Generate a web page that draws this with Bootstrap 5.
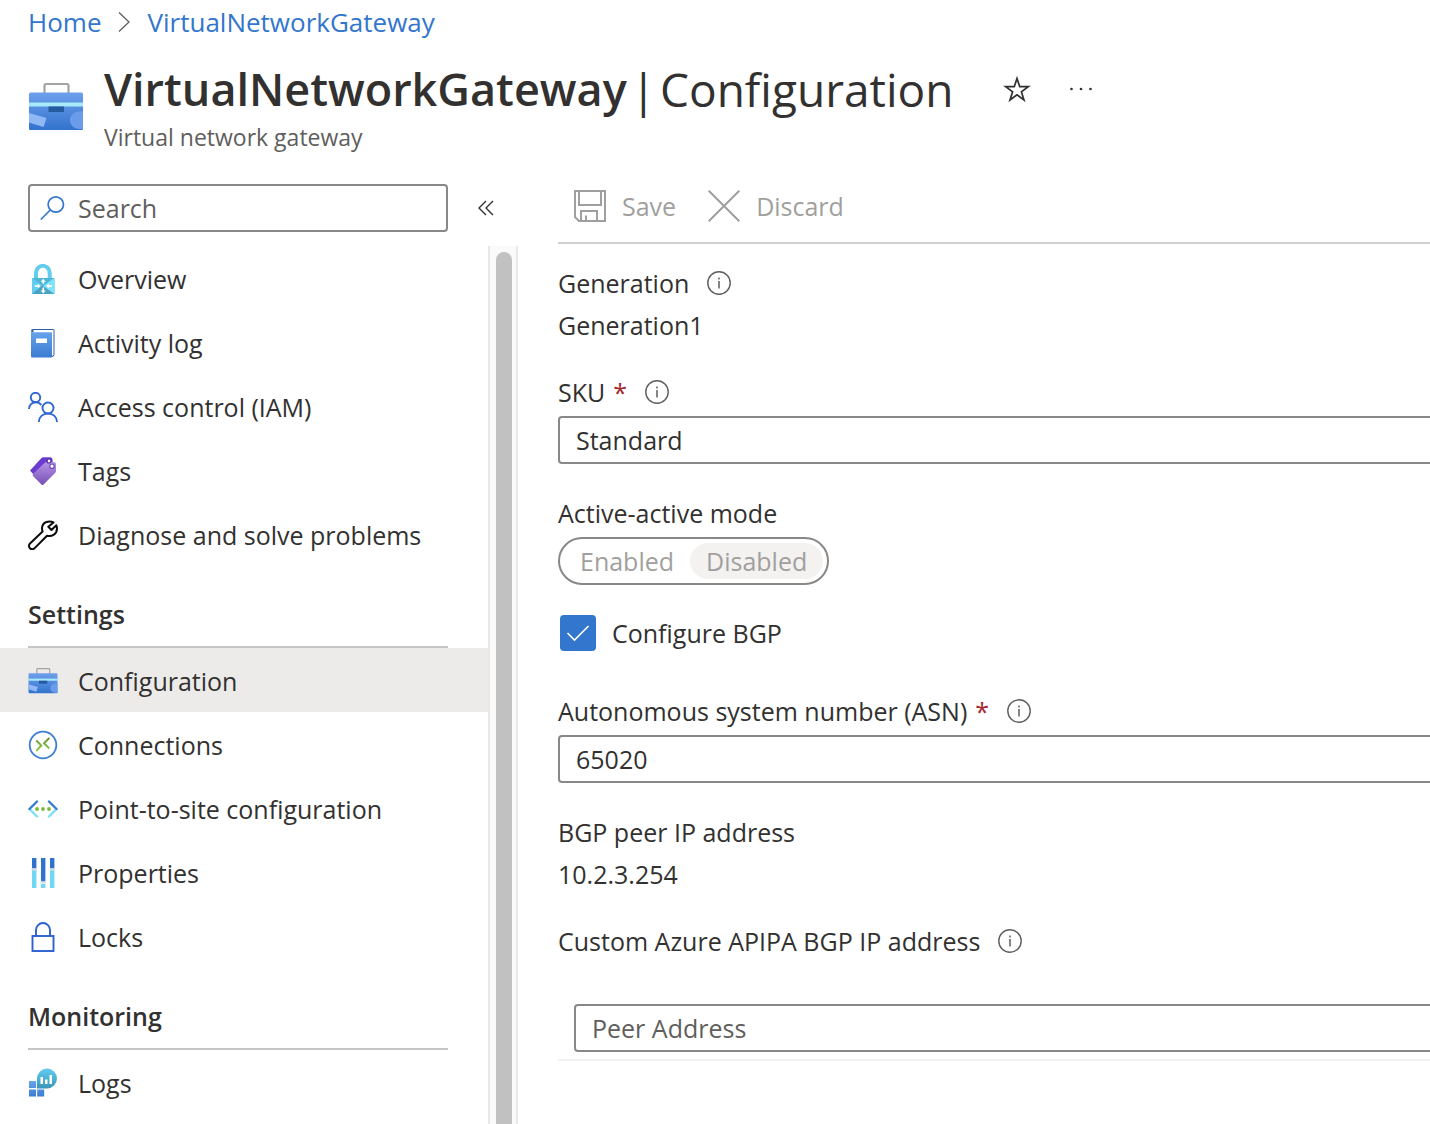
<!DOCTYPE html>
<html lang="en">
<head>
<meta charset="utf-8">
<meta name="viewport" content="width=device-width, initial-scale=1">
<title>VirtualNetworkGateway | Configuration</title>
<link href="https://cdn.jsdelivr.net/npm/bootstrap@5.3.0/dist/css/bootstrap.min.css" rel="stylesheet">
<style>
  :root { --ink: #323130; --line: #8a8886; --azure: #3376cd; --muted: #605e5c; --off: #a19f9d; }
  body { font-family: "Open Sans", "Noto Sans", sans-serif; font-size: 25px; line-height: 36px; color: var(--ink); background: #fff; }
  .portal { height: 100vh; overflow: hidden; }
  .crumbs { --bs-breadcrumb-margin-bottom: 0; font-size: 26px; padding: 4px 28px 6px; }
  .crumbs a { color: var(--azure); text-decoration: none; }
  .blade-head { padding: 11px 28px 0; gap: 20px; min-height: 138px; }
  .blade-head > svg { margin-top: 22px; }
  .blade-title { font-size: 46px; line-height: 64px; font-weight: 400; gap: 4px; }
  .blade-title strong { font-size: 45px; font-weight: 600; }
  .blade-sub { font-size: 23px; line-height: 32px; color: var(--muted); }
  .bare { border: 0; background: none; padding: 0; color: var(--ink); display: inline-flex; align-items: center; }
  .side { width: 518px; }
  .body-row { min-height: 0; }
  .search-row { padding-left: 28px; margin-bottom: 14px; gap: 30px; }
  .search-box { width: 420px; height: 48px; border: 2px solid var(--line); border-radius: 4px; padding: 0 10px; gap: 12px; }
  .search-box input { border: 0; padding: 0; height: 44px; font-size: 25px; line-height: 36px; color: var(--ink); box-shadow: none !important; }
  input::placeholder { color: var(--muted) !important; opacity: 1; }
  .menu > * { flex-shrink: 0; }
  .menu a { height: 64px; padding: 2px 0 0 28px; gap: 20px; color: var(--ink); text-decoration: none; white-space: nowrap; }
  .menu a.current { background: #edebe9; }
  .menu h2 { font-size: 25px; line-height: 36px; font-weight: 600; margin: 0 40px 0 28px; height: 82px; padding-top: 30px; border-bottom: 2px solid #c8c6c4; }
  .track { width: 30px; flex: none; background: #fafafa; border: solid #e8e8e8; border-width: 0 2px; padding: 6px 4px 0 6px; }
  .thumb { width: 16px; height: 100%; border-radius: 8px 8px 0 0; background: #c1c1c1; }
  .pane { margin: 0 -60px 0 40px; min-width: 0; }
  .tools { height: 60px; border-bottom: 2px solid #d2d0ce; padding: 0 16px 14px; gap: 32px; }
  .tools button { color: var(--off); gap: 16px; }
  .lbl { display: flex; align-items: center; gap: 18px; margin-bottom: 6px; }
  .req { color: #a4262c; margin-left: 8px; }
  .first-field { margin-top: 21px; }
  .field { margin-top: 31px; }
  .field-tick { margin-top: 30px; }
  .field-wide { margin-top: 42px; }
  .ctl { height: 48px; border: 2px solid var(--line); border-radius: 4px; padding: 0 16px; font-size: 25px; line-height: 36px; color: var(--ink); background-color: #fff; }
  .pill { display: flex; width: fit-content; height: 48px; border: 2px solid var(--line); border-radius: 24px; padding: 4px; }
  .pill button { border: 0; background: none; border-radius: 18px; padding: 0 16px; color: var(--off); line-height: 36px; }
  .pill button.on { background: #f3f2f1; }
  .tick { width: 36px; height: 36px; margin: 0 16px 0 2px; flex: none; border: 0; border-radius: 4px !important; }
  .tick:checked { background-color: var(--azure); background-image: url("data:image/svg+xml,%3Csvg xmlns='http://www.w3.org/2000/svg' viewBox='0 0 36 36'%3E%3Cpath d='M7.500 18l7 7L28.500 11' fill='none' stroke='white' stroke-width='1.600'/%3E%3C/svg%3E"); background-size: 36px 36px; }
  .peer { margin-top: 45px; padding: 0 16px 7px; border-bottom: 2px solid #f3f2f1; }
</style>
<script src="https://cdn.jsdelivr.net/npm/bootstrap@5.3.0/dist/js/bootstrap.bundle.min.js"></script>
</head>
<body>
<svg width="0" height="0" class="position-absolute" aria-hidden="true">
  <defs>
    <linearGradient id="gBox" x2="0" y2="1"><stop stop-color="#6ea0ec"/><stop offset="1" stop-color="#3273cd"/></linearGradient>
    <linearGradient id="gBook" x2="0" y2="1"><stop stop-color="#6aa5ec"/><stop offset="1" stop-color="#3a7cd2"/></linearGradient>
    <linearGradient id="gTag" x2="0" y2="1"><stop stop-color="#b893e8"/><stop offset="1" stop-color="#7650b4"/></linearGradient>
    <linearGradient id="gAqua" x2="0" y2="1"><stop stop-color="#62cdf0"/><stop offset="1" stop-color="#3a96b8"/></linearGradient>
    <linearGradient id="gGreen" x2="0" y2="1"><stop stop-color="#5d9428"/><stop offset="1" stop-color="#92d050"/></linearGradient>
    <symbol id="toolbox" viewBox="0 0 56 56">
      <path d="M16.500 15V6.500a1.500 1.500 0 0 1 1.500-1.500h21a1.500 1.500 0 0 1 1.500 1.500V15" fill="none" stroke="#a3a3a3" stroke-width="2.200"/>
      <rect x="1" y="13.500" width="54" height="37.500" rx="1.500" fill="url(#gBox)"/>
      <path d="M1 23.500h54v4H1z" fill="#a8e9fa"/><path d="M20.500 27.500h15.500v5.500H20.500z" fill="#245b9e"/>
      <path d="M1 34l17.500 5-3 9L1 43.500z" fill="#8fb8f5"/><path d="M55 32.500v17a9 9 0 0 1-3 .5c-6 0-10-4-10-9s5-9.500 13-8.500z" fill="#6b9ceb"/>
    </symbol>
    <symbol id="info" viewBox="0 0 24 24"><circle cx="12" cy="12" r="11.200" fill="none" stroke="#605e5c" stroke-width="1.400"/><path d="M12 10v7.500M12 6.600v1.800" stroke="#605e5c" stroke-width="1.500"/></symbol>
  </defs>
</svg>

<div class="portal d-flex flex-column">
  <nav aria-label="breadcrumb">
    <ol class="breadcrumb crumbs align-items-center">
      <li><a href="#">Home</a></li>
      <li class="d-flex px-3" aria-hidden="true"><svg width="14" height="20" viewBox="0 0 14 20"><path d="M2 .5l10 9.500-10 9.500" fill="none" stroke="#605e5c" stroke-width="1.300"/></svg></li>
      <li><a href="#">VirtualNetworkGateway</a></li>
    </ol>
  </nav>

  <header class="blade-head d-flex align-items-start">
    <svg width="56" height="56" class="flex-shrink-0"><use href="#toolbox"/></svg>
    <div>
      <div class="d-flex align-items-center">
        <h1 class="blade-title d-flex mb-0 text-nowrap"><strong>VirtualNetworkGateway</strong> <span>|</span> <span>Configuration</span></h1>
        <button class="bare ms-5" aria-label="Favorite"><svg width="32" height="32" viewBox="0 0 32 32"><path d="M16 5.500l2.700 8.100h8.600l-6.900 5.100 2.600 8.300L16 21.900 9 27l2.600-8.300-6.900-5.100h8.600z" fill="none" stroke="#323130" stroke-width="1.700"/></svg></button>
        <button class="bare ms-4 ps-2" aria-label="More"><svg width="32" height="32" viewBox="0 0 32 32"><g fill="#323130"><circle cx="6.500" cy="16" r="1.300"/><circle cx="16" cy="16" r="1.300"/><circle cx="25.500" cy="16" r="1.300"/></g></svg></button>
      </div>
      <div class="blade-sub">Virtual network gateway</div>
    </div>
  </header>

  <div class="body-row d-flex flex-grow-1">
    <aside class="side d-flex flex-column flex-shrink-0">
      <div class="search-row d-flex align-items-center">
        <div class="search-box d-flex align-items-center">
          <svg width="26" height="26" viewBox="0 0 26 26" class="flex-shrink-0"><g fill="none" stroke="#3376cd" stroke-width="1.700"><circle cx="15.800" cy="9.500" r="7.700"/><path d="M10.300 15L.8 24.500"/></g></svg>
          <input type="search" class="form-control" placeholder="Search" aria-label="Search">
        </div>
        <button class="bare" aria-label="Collapse menu"><svg width="16" height="16" viewBox="0 0 16 16"><path d="M8 1L1 8l7 7M15 1L8 8l7 7" fill="none" stroke="#323130" stroke-width="1.400"/></svg></button>
      </div>
      <div class="d-flex flex-grow-1 overflow-hidden">
        <nav class="menu flex-grow-1 d-flex flex-column" aria-label="Resource menu">
          <a href="#" class="d-flex align-items-center"><svg width="30" height="30" viewBox="0 0 30 30"><path d="M8 15V9a6.700 7 0 0 1 13.700 0v6" fill="none" stroke="#63cdee" stroke-width="4"/><rect x="4" y="14" width="22.500" height="16" rx=".8" fill="#62cdf0"/><path d="M4 14l11 8 11.500-8z" fill="#4fb6d6"/><path d="M4 30l11-9 11.500 9z" fill="#4ba3c2"/><path d="M26.500 14L15 22l11.500 8z" fill="#7fe2fb"/><path d="M15.200 14.800l-2.500 3h1.700v2h1.700v-2h1.700zM15.200 29.500l-2.500-3h1.700v-3h1.700v3h1.700zM12.500 22l-2.700-2.500v1.700H6.700v1.700h3.100v1.700zM18.200 22l2.700-2.500v1.700H24v1.700h-3.100v1.700z" fill="#fff"/></svg><span>Overview</span></a>
          <a href="#" class="d-flex align-items-center"><svg width="30" height="30" viewBox="0 0 30 30"><path d="M5 1h20q1.500 0 1.500 1.500V26q0 3-3 3H5z" fill="#2c5fa8"/><path d="M5.500 2H25.500v25l-1.500 1H5z" fill="#fff"/><path d="M3 3q1 1.200 2.500 1.200H23q1 0 1 1V28q0 1.500-1 1.500H4q-1 0-1-1.500z" fill="url(#gBook)"/><path d="M3 3q0-2 2-2v3Q3.500 4 3 3z" fill="#2c5fa8"/><rect x="8" y="10.500" width="11" height="4.500" fill="#fff"/></svg><span>Activity log</span></a>
          <a href="#" class="d-flex align-items-center"><svg width="30" height="30" viewBox="0 0 30 30"><g fill="none" stroke="#2f67d2" stroke-width="1.900"><circle cx="7.500" cy="5.500" r="4.700"/><circle cx="20" cy="16" r="5.500"/><path d="M1 17c0-4 3-6.800 6.700-6.800 2.300 0 4.300 1 5.600 2.800M10.800 30c0-5 4-8.500 9.200-8.500s9 3.500 9 8.500"/></g></svg><span>Access control (IAM)</span></a>
          <a href="#" class="d-flex align-items-center"><svg width="30" height="30" viewBox="0 0 30 30"><path d="M2 14.500L13.500 2q.8-.8 2-.8H22q2.500 0 2.500 2.500L25 8 6 19z" fill="#6c3bd0"/><path d="M5 18L17 6.500q.8-.7 2-.7l7 .2q2 .2 2 2V15q0 1-.7 1.700L15.500 28.500q-1 1-2 0L5 20q-.8-1 0-2z" fill="url(#gTag)"/><circle cx="21" cy="5" r="2" fill="#fff" stroke="#4e2a96" stroke-width="1.200"/><circle cx="24" cy="10.200" r="2.200" fill="#fff" stroke="#6f48b4" stroke-width="1.200"/></svg><span>Tags</span></a>
          <a href="#" class="d-flex align-items-center"><svg width="30" height="30" viewBox="0 0 30 30"><path d="M25.500 2.500C21.500.5 14.500 1.500 14 8c0 1.500.2 2.600.6 3.500L2 23.500c-1.500 1.600-1.300 3.500 0 4.700 1.300 1.300 3.200 1.300 4.700-.1L19 15.800c5 1.200 10-1.800 10-7.300 0-1-.2-2.200-.7-3.200L23.500 10l-3.200-3.200z" fill="none" stroke="#0c0c0c" stroke-width="2" stroke-linejoin="round"/></svg><span>Diagnose and solve problems</span></a>
          <h2>Settings</h2>
          <a href="#" class="current d-flex align-items-center" aria-current="page"><svg width="30" height="30"><use href="#toolbox"/></svg><span>Configuration</span></a>
          <a href="#" class="d-flex align-items-center"><svg width="30" height="30" viewBox="0 0 30 30"><circle cx="15" cy="15" r="13.300" fill="#fff" stroke="#3d7fd6" stroke-width="1.800"/><path d="M8.300 10.500l5 5-5 5.500M21.300 8l-5.300 5.200 5.300 5.300" fill="none" stroke="url(#gGreen)" stroke-width="1.900"/></svg><span>Connections</span></a>
          <a href="#" class="d-flex align-items-center"><svg width="30" height="30" viewBox="0 0 30 30"><g fill="none" stroke-width="2.400" stroke-linecap="round"><path d="M1.500 15L9 22.500M28.500 15L21 22.500" stroke="#7adff8"/><path d="M1.500 15L9 7.500M28.500 15L21 7.500" stroke="#3a7dd0"/></g><g fill="#7cb83c"><circle cx="9" cy="15" r="1.900"/><circle cx="15" cy="15" r="1.900"/><circle cx="21" cy="15" r="1.900"/></g></svg><span>Point-to-site configuration</span></a>
          <a href="#" class="d-flex align-items-center"><svg width="30" height="30" viewBox="0 0 30 30"><path d="M4 12h4.400v18H4zM13 26h4.400v4H13zM22 12h4.400v18H22z" fill="#70d8f5"/><path d="M4 0h4.400v10.500H4zM13 0h4.400v23.500H13zM22 0h4.400v10.500H22z" fill="#2f73cc"/><path d="M3.500 10.500h5.400v2H3.500zM12.500 23.500h5.400v2h-5.400zM21.500 10.500h5.400v2h-5.400z" fill="#d8dde2"/></svg><span>Properties</span></a>
          <a href="#" class="d-flex align-items-center"><svg width="30" height="30" viewBox="0 0 30 30"><g fill="none" stroke="#2c60d0" stroke-width="1.900"><rect x="4.500" y="14" width="21" height="15"/><path d="M8 14V8a7 7 0 0 1 14 0v6"/></g></svg><span>Locks</span></a>
          <h2>Monitoring</h2>
          <a href="#" class="d-flex align-items-center"><svg width="30" height="30" viewBox="0 0 30 30"><path d="M1 13h7v7H1zM1 21.500h7v7H1zM9.200 21.500h7v7h-7z" fill="url(#gBook)"/><path d="M19 .5a10 10 0 0 1 0 20H9v-10a10 10 0 0 1 10-10z" fill="url(#gAqua)"/><path d="M12.500 9h2.500v7h-2.500zM17 11.500h2.500V16H17zM21.500 7H24v9h-2.500z" fill="#fff"/></svg><span>Logs</span></a>
        </nav>
        <div class="track" aria-hidden="true"><div class="thumb"></div></div>
      </div>
    </aside>

    <main class="pane flex-grow-1">
      <div class="tools d-flex align-items-center">
        <button class="bare" disabled><svg width="32" height="32" viewBox="0 0 32 32"><g fill="none" stroke="#a19f9d" stroke-width="2"><path d="M1 1h30v30H5l-4-4z"/><path d="M5 1v14h22V1M7 31V21h16v10M12 31v-5.500"/></g></svg><span>Save</span></button>
        <button class="bare" disabled><svg width="32" height="32" viewBox="0 0 32 32"><path d="M.7.700l30.600 30.600M31.300.700L.7 31.300" stroke="#a19f9d" stroke-width="2"/></svg><span>Discard</span></button>
      </div>

      <section class="first-field">
        <div class="lbl">Generation <svg width="24" height="24"><use href="#info"/></svg></div>
        <div>Generation1</div>
      </section>
      <div class="field">
        <label class="lbl" for="sku"><span>SKU<span class="req">*</span></span><svg width="24" height="24"><use href="#info"/></svg></label>
        <select id="sku" class="form-select ctl"><option>Standard</option></select>
      </div>
      <div class="field">
        <div class="lbl" id="aam">Active-active mode</div>
        <div class="pill" role="group" aria-labelledby="aam"><button disabled>Enabled</button><button class="on" disabled>Disabled</button></div>
      </div>
      <div class="field-tick d-flex align-items-center">
        <input type="checkbox" class="form-check-input tick" id="bgp" checked><label for="bgp">Configure BGP</label>
      </div>
      <div class="field-wide">
        <label class="lbl" for="asn"><span>Autonomous system number (ASN)<span class="req">*</span></span><svg width="24" height="24"><use href="#info"/></svg></label>
        <input id="asn" type="text" class="form-control ctl" value="65020">
      </div>
      <div class="field">
        <div class="lbl">BGP peer IP address</div>
        <div>10.2.3.254</div>
      </div>
      <div class="field">
        <label class="lbl" for="peer">Custom Azure APIPA BGP IP address <svg width="24" height="24"><use href="#info"/></svg></label>
        <div class="peer"><input id="peer" type="text" class="form-control ctl" placeholder="Peer Address"></div>
      </div>
    </main>
  </div>
</div>
</body>
</html>
